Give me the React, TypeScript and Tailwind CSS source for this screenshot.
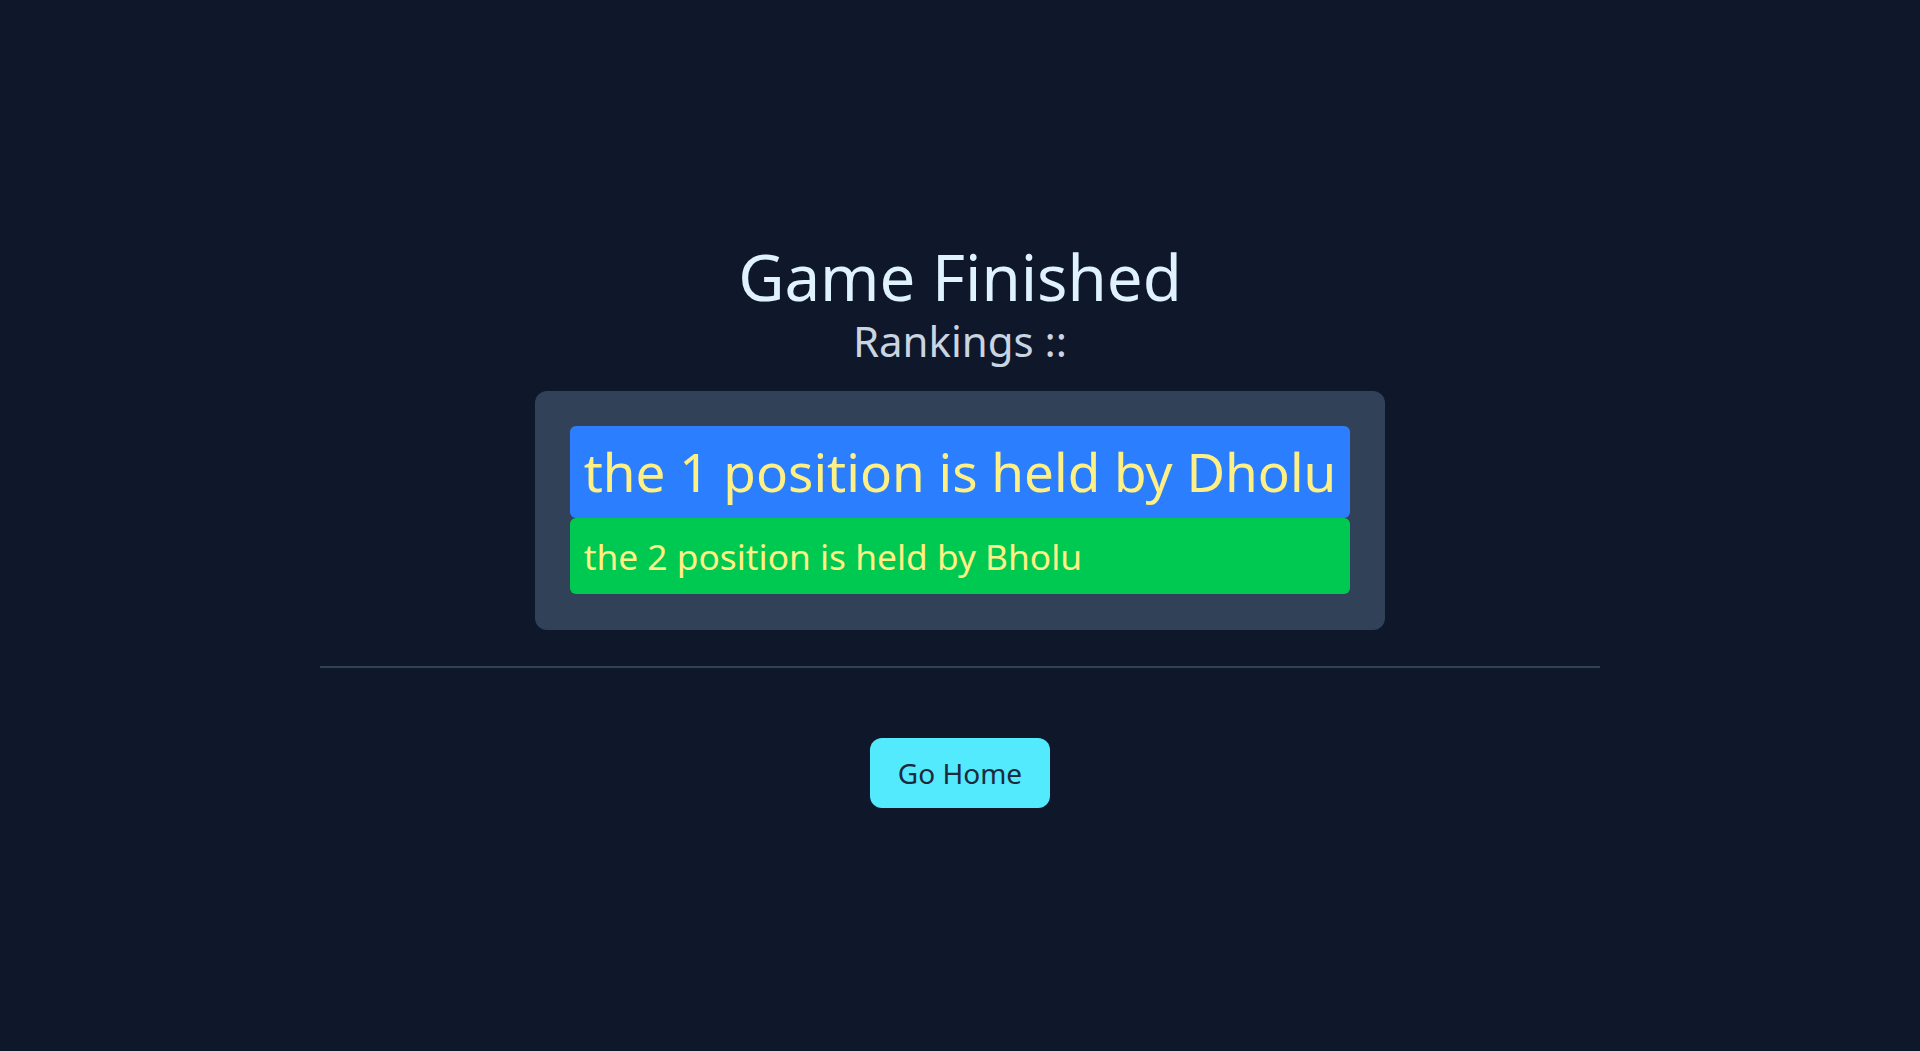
export default function App() {
  const rankings = [
    { name: "Dholu", cls: "bg-blue-500 text-[53px] leading-[54px]" },
    { name: "Bholu", cls: "bg-green-500 text-[35.3px] leading-[38px]" },
  ];

  return (
    <div className="min-h-screen bg-slate-900 flex flex-col items-center pt-[245px] font-['Noto_Sans',sans-serif]">
      <h1 className="text-[63.6px] leading-none font-normal text-sky-100">Game Finished</h1>
      <h2 className="mt-[11px] text-[42px] leading-none font-normal text-slate-300">Rankings ::</h2>

      <div className="mt-[29px] w-fit flex flex-col rounded-xl bg-slate-700 px-[35px] pt-[35px] pb-[36px]">
        {rankings.map((r, i) => (
          <div key={r.name} className={`rounded-md px-[14px] py-[19px] text-yellow-200 ${r.cls}`}>
            the {i + 1} position is held by {r.name}
          </div>
        ))}
      </div>

      <div className="mt-[36px] w-[1280px] h-[2px] bg-slate-700" />

      <button className="mt-[70px] rounded-xl bg-cyan-300 px-7 py-4 text-[28px] leading-[38px] text-slate-800">
        Go Home
      </button>
    </div>
  );
}
